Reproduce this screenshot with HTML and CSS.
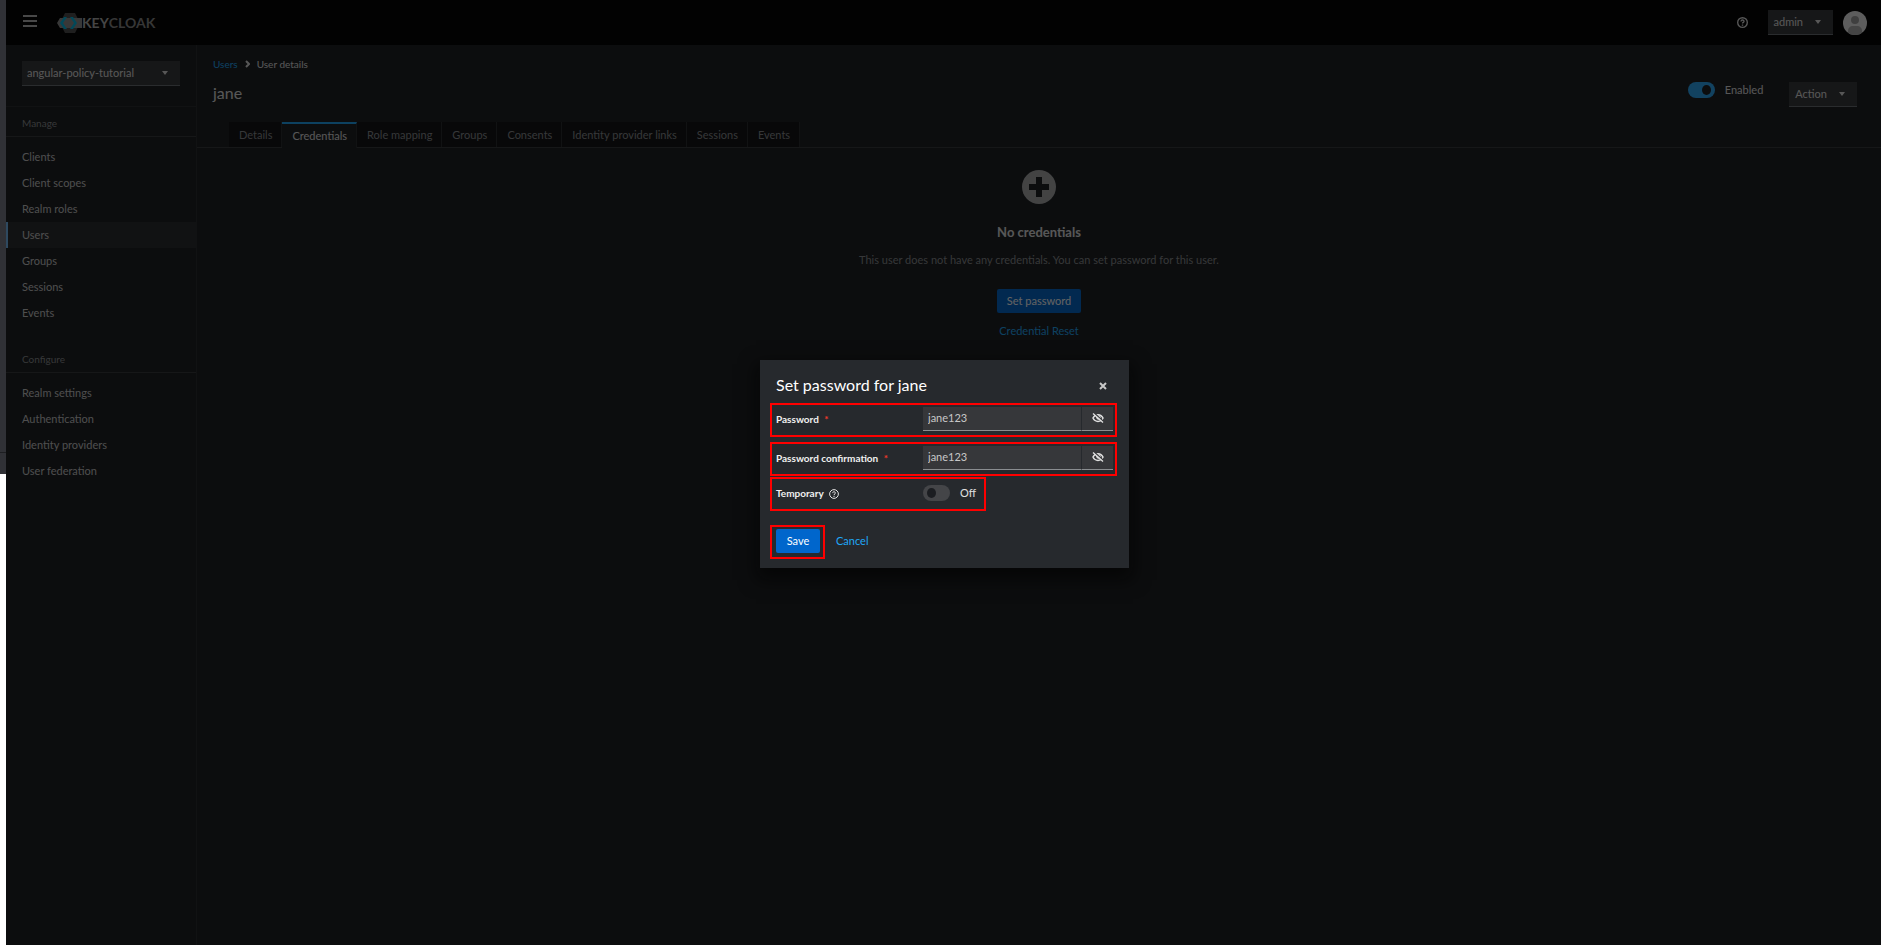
FILE: index.html
```
<!DOCTYPE html>
<html lang="en">
<head>
    <meta charset="UTF-8">
    <meta name="viewport" content="width=device-width, initial-scale=1.0">
    <title>Keycloak Administration Console</title>
    <link rel="stylesheet" href="styles.css">
</head>
<body>
    <div class="edge"></div>

    <div class="app">
        <header class="header">
            <button class="burger" aria-label="Global navigation"><span></span><span></span><span></span></button>
            <a href="#" class="logo">
                <svg width="25" height="20" viewBox="0 0 25 20">
                    <path d="M8 0h10l5 10-5 10H8L3 10z" fill="#4d4d4d"/>
                    <path d="M3 5h22v10H3L0 10z" fill="#8f8f8f"/>
                    <path d="M10 4H7l-4 6 4 6h3l-4-6zM13 4h3l4 6-4 6h-3l4-6z" fill="#00b8e3"/>
                </svg>
                <span class="key">KEY</span><span class="cloak">CLOAK</span>
            </a>
            <div class="tools">
                <button class="help" aria-label="Help">
                    <svg width="11" height="11" viewBox="0 0 16 16" fill="none" stroke="currentColor" stroke-width="2">
                        <circle cx="8" cy="8" r="7"/>
                        <path d="M5.800 6.500C6 3.500 10.500 4 10.200 6.500 10 8 8 7.800 8 9.600M8 10.800v2"/>
                    </svg>
                </button>
                <button class="toggle">admin <i class="caret"></i></button>
                <svg class="avatar" width="24" height="24" viewBox="0 0 24 24">
                    <clipPath id="round"><circle cx="12" cy="12" r="12"/></clipPath>
                    <g clip-path="url(#round)">
                        <rect width="24" height="24" fill="#f0f0f0"/>
                        <circle cx="12" cy="9" r="4" fill="#a0a0a0"/>
                        <path d="M5 24v-4c0-3 2-5 5-5h4c3 0 5 2 5 5v4z" fill="#b0b0b0"/>
                    </g>
                </svg>
            </div>
        </header>

        <div class="page">
            <nav class="sidebar">
                <div class="realm">
                    <button class="toggle">angular-policy-tutorial <i class="caret"></i></button>
                </div>
                <section>
                    <h2>Manage</h2>
                    <ul>
                        <li><a href="#">Clients</a></li>
                        <li><a href="#">Client scopes</a></li>
                        <li><a href="#">Realm roles</a></li>
                        <li><a href="#" class="current">Users</a></li>
                        <li><a href="#">Groups</a></li>
                        <li><a href="#">Sessions</a></li>
                        <li><a href="#">Events</a></li>
                    </ul>
                </section>
                <section>
                    <h2>Configure</h2>
                    <ul>
                        <li><a href="#">Realm settings</a></li>
                        <li><a href="#">Authentication</a></li>
                        <li><a href="#">Identity providers</a></li>
                        <li><a href="#">User federation</a></li>
                    </ul>
                </section>
            </nav>

            <main>
                <div class="titlebar">
                    <div>
                        <div class="breadcrumb">
                            <a href="#">Users</a>
                            <svg width="5" height="8" viewBox="0 0 5 8" fill="none" stroke="currentColor" stroke-width="2"><path d="M1 1l3 3-3 3"/></svg>
                            <span>User details</span>
                        </div>
                        <h1>jane</h1>
                    </div>
                    <div class="actions">
                        <label class="enabled"><input type="checkbox" class="switch" checked> Enabled</label>
                        <button class="toggle">Action <i class="caret"></i></button>
                    </div>
                </div>

                <div class="tabs">
                    <button>Details</button>
                    <button class="active">Credentials</button>
                    <button>Role mapping</button>
                    <button>Groups</button>
                    <button>Consents</button>
                    <button>Identity provider links</button>
                    <button>Sessions</button>
                    <button>Events</button>
                </div>

                <div class="empty">
                    <svg width="36" height="36" viewBox="0 0 36 36">
                        <circle cx="18" cy="18" r="17" fill="#aaabac"/>
                        <path d="M15 8h6v7h7v6h-7v7h-6v-7H8v-6h7z" fill="#1b1d21"/>
                    </svg>
                    <h2>No credentials</h2>
                    <p>This user does not have any credentials. You can set password for this user.</p>
                    <button class="primary">Set password</button>
                    <a href="#">Credential Reset</a>
                </div>
            </main>
        </div>

        <div class="backdrop">
            <form class="modal" role="dialog" aria-labelledby="modal-title">
                <div class="modal-head">
                    <h2 id="modal-title">Set password for jane</h2>
                    <button type="button" class="close" aria-label="Close">
                        <svg width="8" height="8" viewBox="0 0 8 8" stroke="currentColor" stroke-width="2"><path d="M1 1l6 6M7 1L1 7"/></svg>
                    </button>
                </div>

                <div class="row marked">
                    <label for="password">Password <span class="required">*</span></label>
                    <input type="text" id="password" value="jane123">
                    <button type="button" class="eye" aria-label="Hide password">
                        <svg width="12" height="10" viewBox="0 0 12 10" fill="none" stroke="currentColor">
                            <path d="M1 5c2-4.500 8-4.500 10 0-2 4.500-8 4.500-10 0z" stroke-width="1.500"/>
                            <circle cx="6.500" cy="4.500" r="1.800" fill="currentColor"/>
                            <path d="M2 0l10 9" stroke="#36373a" stroke-width="1.500"/>
                            <path d="M1 .5l10 9" stroke-width="1.300"/>
                        </svg>
                    </button>
                </div>

                <div class="row marked">
                    <label for="confirmation">Password confirmation <span class="required">*</span></label>
                    <input type="text" id="confirmation" value="jane123">
                    <button type="button" class="eye" aria-label="Hide password">
                        <svg width="12" height="10" viewBox="0 0 12 10" fill="none" stroke="currentColor">
                            <path d="M1 5c2-4.500 8-4.500 10 0-2 4.500-8 4.500-10 0z" stroke-width="1.500"/>
                            <circle cx="6.500" cy="4.500" r="1.800" fill="currentColor"/>
                            <path d="M2 0l10 9" stroke="#36373a" stroke-width="1.500"/>
                            <path d="M1 .5l10 9" stroke-width="1.300"/>
                        </svg>
                    </button>
                </div>

                <div class="row marked temporary">
                    <label for="temporary">Temporary
                        <svg width="10" height="10" viewBox="0 0 16 16" fill="none" stroke="currentColor" stroke-width="1.500">
                            <circle cx="8" cy="8" r="7"/>
                            <path d="M5.800 6.500C6 3.500 10.500 4 10.200 6.500 10 8 8 7.800 8 9.600M8 10.800v2"/>
                        </svg>
                    </label>
                    <input type="checkbox" class="switch" id="temporary">
                    <span class="off">Off</span>
                </div>

                <div class="modal-foot">
                    <div class="marked save"><button type="button" class="primary">Save</button></div>
                    <button type="button" class="cancel">Cancel</button>
                </div>
            </form>
        </div>
    </div>
</body>
</html>
```
FILE: styles.css
```
* {
    box-sizing: border-box;
    margin: 0;
    padding: 0;
}

body {
    display: flex;
    height: 100vh;
    background-color: #fff;
    color: #e0e0e0;
    font-family: Lato, "Liberation Sans", sans-serif;
    font-size: 11px;
    line-height: 16px;
}

button,
input {
    font: inherit;
    color: inherit;
    background: none;
    border: none;
}

a {
    color: #1fa7f8;
    text-decoration: none;
}

ul {
    list-style: none;
}

h1,
h2 {
    font-weight: normal;
}

/* strip of the window behind */
.edge {
    width: 6px;
    height: 474px;
    background: linear-gradient(#1d1e21, #1d1e21) 0 452px / 100% 1px no-repeat #303136;
}

.app {
    position: relative;
    flex: 1;
    display: flex;
    flex-direction: column;
    background-color: #1b1d21;
}

/* header */
.header {
    display: flex;
    align-items: center;
    height: 45px;
    padding: 0 14px 0 17px;
    background-color: #000;
}

.burger {
    display: flex;
    flex-direction: column;
    gap: 3px;
    width: 14px;
    margin-bottom: 3px;
}

.burger span {
    height: 2px;
    background-color: #b8b8b8;
}

.logo {
    display: flex;
    align-items: center;
    margin-left: 20px;
    font-size: 14px;
    font-weight: bold;
}

.key {
    color: #b0b0b0;
}

.cloak {
    color: #8a8a8a;
}

.tools {
    display: flex;
    align-items: center;
    margin-left: auto;
}

.help {
    height: 11px;
    margin-right: 20px;
    line-height: 0;
}

.avatar {
    margin-left: 10px;
}

.toggle {
    display: flex;
    align-items: center;
    justify-content: space-between;
    gap: 12px;
    height: 25px;
    padding: 0 12px 0 6px;
    background-color: #36373a;
    border-bottom: 1px solid #6a6e73;
}

.caret {
    border: 3px solid transparent;
    border-top: 4px solid currentColor;
    border-bottom: none;
}

/* sidebar */
.page {
    flex: 1;
    display: flex;
}

.sidebar {
    width: 191px;
    border-right: 1px solid #292b2f;
}

.realm {
    height: 62px;
    padding: 16px 16px 0;
    border-bottom: 1px solid #292b2f;
}

.realm .toggle {
    width: 100%;
    padding-left: 5px;
}

.sidebar h2 {
    height: 30px;
    padding: 8px 16px 0;
    border-bottom: 1px solid #36383c;
    color: #8a8d90;
    font-size: 10px;
}

.sidebar ul {
    padding: 7px 0 17px;
}

.sidebar li a {
    display: block;
    height: 26px;
    padding: 5px 16px;
    color: #c8c8c8;
}

.sidebar li a.current {
    padding-left: 14px;
    border-left: 2px solid #73bcf7;
    background-color: #292b2f;
}

/* content */
main {
    flex: 1;
}

.titlebar {
    display: flex;
    justify-content: space-between;
    height: 77px;
    padding: 11px 24px 0 16px;
}

.breadcrumb {
    display: flex;
    align-items: center;
    gap: 7px;
    font-size: 10px;
}

h1 {
    margin-top: 11px;
    font-size: 16px;
    line-height: 20px;
}

.actions {
    display: flex;
    align-items: flex-start;
    gap: 26px;
    padding-top: 26px;
}

.enabled {
    display: flex;
    align-items: center;
    gap: 10px;
}

.switch {
    appearance: none;
    display: flex;
    align-items: center;
    width: 27px;
    height: 16px;
    padding: 0 4px;
    border-radius: 8px;
    background-color: #444548;
}

.switch::before {
    content: "";
    width: 9px;
    height: 10px;
    border-radius: 50%;
    background-color: #1b1d21;
}

.switch:checked {
    justify-content: flex-end;
    background-color: #2ba8f8;
}

.tabs {
    display: flex;
    height: 26px;
    padding-left: 32px;
    border-bottom: 1px solid #36383c;
}

.tabs button {
    height: 25px;
    padding: 0 9px 0 10px;
    border-right: 1px solid #292b2f;
    background-color: #101114;
    color: #8a8d90;
}

.tabs .active {
    height: 26px;
    border-top: 2px solid #1fa7f8;
    background-color: #1b1d21;
    color: #e0e0e0;
}

.empty {
    display: flex;
    flex-direction: column;
    align-items: center;
    padding-top: 21px;
}

.empty h2 {
    margin: 19px 0 12px;
    font-size: 13px;
    font-weight: bold;
}

.empty p {
    margin-bottom: 21px;
    color: #8a8d90;
}

.empty a {
    margin-top: 10px;
}

.primary {
    height: 24px;
    padding: 0 10px;
    border-radius: 2px;
    background-color: #06c;
    color: #fff;
}

/* modal */
.backdrop {
    position: absolute;
    inset: 0;
    display: flex;
    align-items: center;
    justify-content: center;
    padding: 0 0 18px 2px;
    background-color: rgba(3, 3, 3, .62);
}

.modal {
    width: 369px;
    padding: 15px 12px 9px 10px;
    background-color: #26292d;
    box-shadow: 0 8px 16px 4px rgba(3, 3, 3, .6);
}

.modal-head {
    display: flex;
    align-items: center;
    justify-content: space-between;
    height: 20px;
    margin-bottom: 8px;
    padding: 0 10px 0 6px;
}

.modal-head h2 {
    color: #fff;
    font-size: 16px;
}

.close {
    padding-top: 2px;
    line-height: 0;
    color: #c8c8c8;
}

.marked {
    border: 2px solid #f00;
}

.row {
    display: flex;
    height: 34px;
    margin-bottom: 5px;
    padding: 2px 2px 4px 4px;
}

.row label {
    width: 147px;
    line-height: 24px;
    font-size: 10px;
    font-weight: bold;
    color: #f0f0f0;
}

.required {
    margin-left: 3px;
    color: #f0392b;
}

.row input[type=text] {
    flex: 1;
    min-width: 0;
    padding: 0 5px;
    border-bottom: 1px solid #8a8d90;
    background-color: #36373a;
    color: #c8c8c8;
}

.eye {
    width: 32px;
    border-left: 1px solid #26292d;
    border-bottom: 1px solid #8a8d90;
    background-color: #36373a;
    line-height: 0;
}

.temporary {
    align-items: center;
    width: 216px;
    margin: -4px 0 14px;
}

.temporary svg {
    margin-left: 3px;
    vertical-align: -2px;
}

.off {
    margin-left: 10px;
}

.modal-foot {
    display: flex;
    align-items: center;
    gap: 11px;
}

.save {
    width: 55px;
    height: 34px;
    padding: 2px 3px 4px 4px;
}

.save .primary {
    display: block;
    width: 100%;
}

.cancel {
    padding-bottom: 2px;
    color: #1fa7f8;
}
```
